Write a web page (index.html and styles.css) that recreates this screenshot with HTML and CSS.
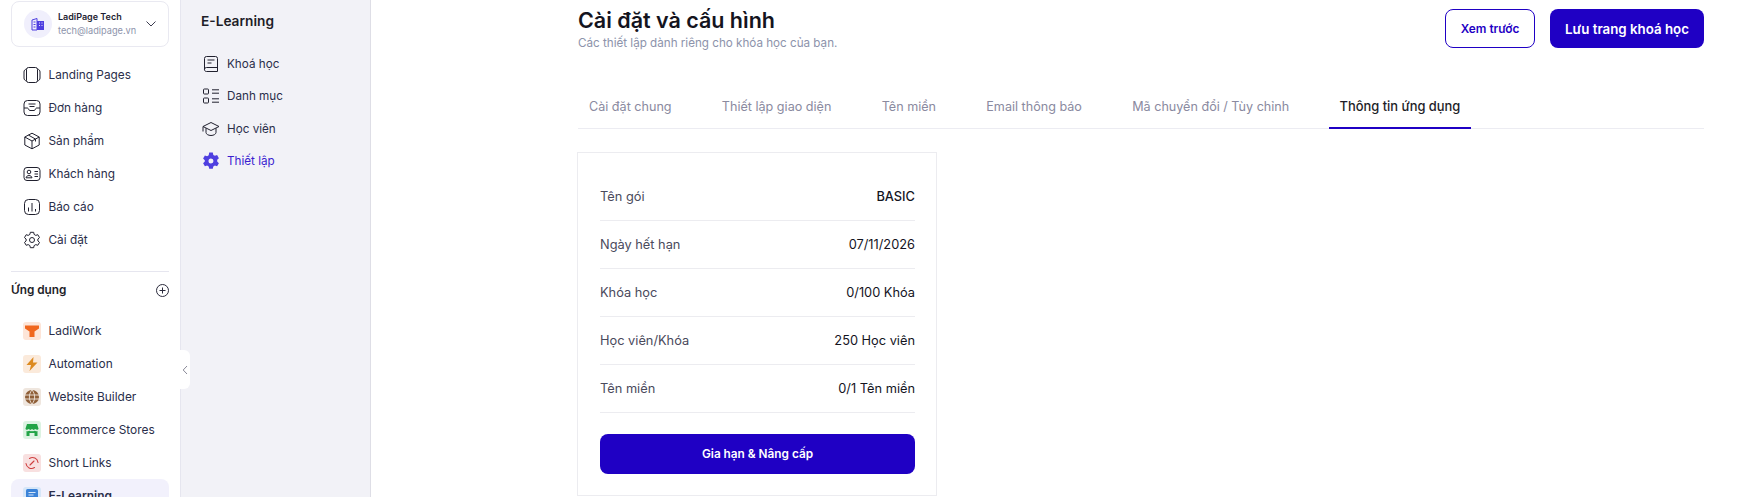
FILE: index.html
```html
<!DOCTYPE html>
<html lang="en">
<head>
    <meta charset="UTF-8">
    <meta name="viewport" content="width=device-width, initial-scale=1.0">
    <title>Cài đặt và cấu hình</title>
    <link rel="stylesheet" href="styles.css">
</head>
<body>
    <div class="container">
        <div class="sidebar">
            <div class="account">
                <div class="account-logo">
                    <svg width="14" height="14" viewBox="0 0 14 14"><path d="M1 13V3l5-1.500V13z" fill="none" stroke="#4f3fe0" stroke-width="1"/><path d="M6 4h7v9H6z" fill="#4f3fe0"/><path d="M2.500 5h2M2.500 7.500h2M2.500 10h2" stroke="#4f3fe0"/><path d="M8 6h1M10.500 6h1M8 8.500h1M10.500 8.500h1" stroke="#e4e1fb"/></svg>
                </div>
                <div class="account-info">
                    <div class="account-name">LadiPage Tech</div>
                    <div class="account-mail">tech@ladipage.vn</div>
                </div>
                <svg class="chevron" width="12" height="8" viewBox="0 0 12 8"><path d="M1.500 1.500 6 6l4.500-4.500" fill="none" stroke="#3c3c50" stroke-width="1"/></svg>
            </div>
            <div class="nav">
                <div class="nav-item">
                    <svg class="icon" viewBox="0 0 18 18"><rect x="3.500" y="1.500" width="11" height="15" rx="2"/><path d="M3.500 3C1.800 3.500 1 4.500 1 6v6c0 1.500.8 2.500 2.500 3M14.500 3c1.700.5 2.500 1.500 2.500 3v6c0 1.500-.8 2.500-2.500 3"/></svg>
                    Landing Pages
                </div>
                <div class="nav-item">
                    <svg class="icon" viewBox="0 0 18 18"><rect x="1" y="1.500" width="16" height="15" rx="3.500"/><path d="M1 9h3.500c1 0 1 2.500 2.500 2.500h4c1.500 0 1.500-2.500 2.500-2.500H17M5.500 5h7M6.500 7.500h5"/></svg>
                    Đơn hàng
                </div>
                <div class="nav-item">
                    <svg class="icon" viewBox="0 0 18 18"><path d="M9 1.200 16.200 5v8L9 16.800 1.800 13V5zM1.800 5 9 9l7.200-4M9 9v7.800M5.500 3.100l7 4v2.400"/></svg>
                    Sản phẩm
                </div>
                <div class="nav-item">
                    <svg class="icon" viewBox="0 0 18 18"><rect x="1" y="2.500" width="16" height="13" rx="3"/><circle cx="6" cy="7" r="1.800"/><path d="M3 12.800c.4-3 5.600-3 6 0zM11.500 6.500H15M11.500 9H15M11.500 11.500H15"/></svg>
                    Khách hàng
                </div>
                <div class="nav-item">
                    <svg class="icon" viewBox="0 0 18 18"><rect x="1.500" y="1.500" width="15" height="15" rx="4"/><path d="M5.500 9.500v4M9 5v8.500M12.500 11v2.500"/></svg>
                    Báo cáo
                </div>
                <div class="nav-item">
                    <svg class="icon" viewBox="0 0 18 18"><circle cx="9" cy="9" r="2.500"/><path d="M7.300 1.300h3.400l.4 2.100 1.700 1 2-.7 1.700 2.900-1.600 1.400v2l1.600 1.400-1.700 2.900-2-.7-1.700 1-.4 2.100H7.300l-.4-2.100-1.700-1-2 .7-1.700-2.900 1.600-1.400v-2L1.500 6.600l1.700-2.900 2 .7 1.700-1z" stroke-linejoin="round"/></svg>
                    Cài đặt
                </div>
            </div>
            <div class="apps-head">
                <span>Ứng dụng</span>
                <svg width="13" height="13" viewBox="0 0 13 13" class="add"><circle cx="6.500" cy="6.500" r="6"/><path d="M6.500 3.500v6M3.500 6.500h6"/></svg>
            </div>
            <div class="apps">
                <div class="app-item">
                    <span class="app-icon tint-orange"><svg width="14" height="14" viewBox="0 0 14 14"><path d="M0 1.500h14v3L9.500 7.500V13h-5V7.500L0 4.500z" fill="#f0671e"/></svg></span>
                    LadiWork
                </div>
                <div class="app-item">
                    <span class="app-icon tint-amber"><svg width="14" height="14" viewBox="0 0 14 14"><path d="M8.500 0 1.500 8H6L4.500 14 12.500 5.500H8z" fill="#dc8a20"/></svg></span>
                    Automation
                </div>
                <div class="app-item">
                    <span class="app-icon tint-brown"><svg width="14" height="14" viewBox="0 0 14 14"><circle cx="7" cy="7" r="7" fill="#8f5f38"/><path d="M0 5h14M0 9h14M7 0C3.500 4 3.500 10 7 14M7 0c3.500 4 3.500 10 0 14" fill="none" stroke="#efe6de" stroke-width=".9"/></svg></span>
                    Website Builder
                </div>
                <div class="app-item">
                    <span class="app-icon tint-green"><svg width="14" height="14" viewBox="0 0 14 14"><path d="M2 1h10l1.500 4.500c0 1.500-2 1.800-3.200.6-1 1.100-2.400 1.100-3.300 0-1 1.100-2.300 1.100-3.300 0C2.500 7.300.5 7 .5 5.500zM1.500 8c1 .3 2 .2 2.800-.2.900.6 1.800.6 2.700.2.900.4 1.800.4 2.700-.2.800.4 1.800.5 2.800.2v5H9.500v-3h-5v3h-3z" fill="#22a447"/></svg></span>
                    Ecommerce Stores
                </div>
                <div class="app-item">
                    <span class="app-icon tint-red"><svg width="14" height="14" viewBox="0 0 14 14" fill="none" stroke="#cf3f3f" stroke-width="1.100" stroke-linecap="round"><path d="M4.500 2.500A5.500 5.500 0 0 1 13 6.500M9.500 11.500A5.500 5.500 0 0 1 1 7.500M5 9 9 5"/></svg></span>
                    Short Links
                </div>
                <div class="app-item active">
                    <span class="app-icon tint-blue"><svg width="14" height="14" viewBox="0 0 14 14"><rect x="1" y="0" width="12" height="14" rx="1.500" fill="#3b83d8"/><path d="M3.500 3.500h7M3.500 6h5" stroke="#d6e6f8" stroke-width="1.200"/></svg></span>
                    E-Learning
                </div>
            </div>
            <div class="collapse">
                <svg width="6" height="10" viewBox="0 0 6 10"><path d="M5 1 1.200 5 5 9" fill="none" stroke="#8a8a98" stroke-width="1"/></svg>
            </div>
        </div>
        <div class="subnav">
            <h2>E-Learning</h2>
            <div class="sub-item">
                <svg class="icon" viewBox="0 0 18 18"><path d="M2.500 14V3.500a2 2 0 0 1 2-2h9a2 2 0 0 1 2 2v13h-11a2 2 0 0 1-2-2.500 2 2 0 0 1 2-1.500h11M5.500 5h7M5.500 8h4"/></svg>
                Khoá học
            </div>
            <div class="sub-item">
                <svg class="icon" viewBox="0 0 18 18"><rect x="1.500" y="2" width="5" height="5" rx=".8"/><rect x="1.500" y="11" width="5" height="5" rx=".8"/><path d="M10 2.800h7M10 6.200h7M10 11.800h7M10 15.200h7"/></svg>
                Danh mục
            </div>
            <div class="sub-item">
                <svg class="icon" viewBox="0 0 18 18"><path d="M9 2.500 17 6.500 9 10.500 1 6.500zM4 8.200v4.300c0 1.500 2.200 3 5 3s5-1.500 5-3V8.200M1 6.500v5"/></svg>
                Học viên
            </div>
            <div class="sub-item current">
                <svg class="icon" viewBox="0 0 18 18"><path class="solid" fill-rule="evenodd" d="M7.200.6h3.600l.5 2.300 1.600.9 2.200-.7 1.800 3.100-1.700 1.600v1.800l1.700 1.600-1.800 3.100-2.200-.7-1.600.9-.5 2.300H7.200l-.5-2.300-1.600-.9-2.200.7-1.800-3.100 1.700-1.600V8.200L1.100 6.600l1.800-3.100 2.200.7 1.600-.9zM9 6.500a2.500 2.500 0 1 0 0 5 2.500 2.500 0 0 0 0-5z"/></svg>
                Thiết lập
            </div>
        </div>
        <div class="main-content">
            <div class="page-head">
                <div>
                    <h1>Cài đặt và cấu hình</h1>
                    <p class="page-desc">Các thiết lập dành riêng cho khóa học của bạn.</p>
                </div>
                <div class="actions">
                    <button class="button outline">Xem trước</button>
                    <button class="button primary">Lưu trang khoá học</button>
                </div>
            </div>
            <div class="tabs">
                <div class="tab">Cài đặt chung</div>
                <div class="tab">Thiết lập giao diện</div>
                <div class="tab">Tên miền</div>
                <div class="tab">Email thông báo</div>
                <div class="tab">Mã chuyển đổi / Tùy chỉnh</div>
                <div class="tab active">Thông tin ứng dụng</div>
            </div>
            <div class="card">
                <div class="row"><span class="label">Tên gói</span><span class="value strong">BASIC</span></div>
                <div class="row"><span class="label">Ngày hết hạn</span><span class="value">07/11/2026</span></div>
                <div class="row"><span class="label">Khóa học</span><span class="value">0/100 Khóa</span></div>
                <div class="row"><span class="label">Học viên/Khóa</span><span class="value">250 Học viên</span></div>
                <div class="row"><span class="label">Tên miền</span><span class="value">0/1 Tên miền</span></div>
                <button class="button upgrade">Gia hạn &amp; Nâng cấp</button>
            </div>
        </div>
    </div>
</body>
</html>
```

FILE: styles.css
```css
* { box-sizing: border-box; }
html, body { margin: 0; height: 100%; overflow: hidden; }
body { font-family: Inter, "Noto Sans", sans-serif; color: #1e1e32; background-color: #fff; }
.container { display: flex; height: 497px; overflow: hidden; }

.sidebar { position: relative; width: 180px; flex-shrink: 0; padding: 1px 11px 0; background-color: #fff; }
.account { display: flex; align-items: center; height: 46px; padding: 0 11px 0 12px; border: 1px solid #e9e9f1; border-radius: 8px; }
.account-logo { display: flex; align-items: center; justify-content: center; flex-shrink: 0; width: 28px; height: 28px; border-radius: 50%; background-color: #f0effc; }
.account-info { margin-left: 6px; flex: 1; }
.account-name { font-size: 9px; font-weight: 600; line-height: 14px; color: #1e1e32; }
.account-mail { font-size: 9.200px; line-height: 14px; color: #8d93ab; }
.chevron { flex-shrink: 0; }

.icon { width: 18px; height: 18px; flex-shrink: 0; fill: none; stroke: #20202e; stroke-width: 1; }
.nav { margin-top: 11.500px; padding-left: 12px; padding-bottom: 14.500px; border-bottom: 1px solid #e6e6ef; }
.nav-item { display: flex; align-items: center; gap: 7.500px; height: 33px; font-size: 11.800px; color: #2a2e4a; }

.apps-head { display: flex; align-items: center; justify-content: space-between; margin-top: 8px; height: 20px; font-size: 11.800px; font-weight: 600; color: #1e1e28; }
.add { fill: none; stroke: #2a2a3c; stroke-width: 1; }
.apps { margin-top: 14px; }
.app-item { display: flex; align-items: center; gap: 7.500px; height: 33px; padding-left: 12px; font-size: 11.900px; color: #2a2e4a; border-radius: 8px; }
.app-item.active { background-color: #f2f1fc; font-weight: 600; }
.app-icon { display: flex; align-items: center; justify-content: center; flex-shrink: 0; width: 18px; height: 18px; border-radius: 3px; }
.tint-orange { background-color: #fde5d8; }
.tint-amber { background-color: #fbeadb; }
.tint-brown { background-color: #efe6de; }
.tint-green { background-color: #dcf3e2; }
.tint-red { background-color: #f8e0e0; }
.tint-blue { background-color: #d6e6f8; }
.collapse { position: absolute; top: 350px; right: -10px; display: flex; align-items: center; justify-content: center; width: 11px; height: 39px; background-color: #fff; border-radius: 0 6px 6px 0; }

.subnav { width: 191px; flex-shrink: 0; padding: 13px 0 0 21px; background-color: #f2f2f7; border-left: 1px solid #e6e6ef; border-right: 1px solid #dedee6; }
.subnav h2 { margin: 0 0 18px -1px; font-size: 13.700px; line-height: 17px; font-weight: 600; color: #1e1e28; }
.sub-item { display: flex; align-items: center; gap: 7px; height: 32.300px; font-size: 11.700px; color: #2a2e4a; }
.sub-item.current { color: #3a1fd0; }
.sub-item .solid { fill: #4f3fe0; stroke: none; }

.main-content { flex: 1; padding: 0 51px 0 207px; }
.page-head { display: flex; justify-content: space-between; height: 85px; padding-top: 9px; }
h1 { margin: 0; font-size: 21.500px; line-height: 22px; font-weight: 600; color: #14141e; }
.page-desc { margin: 5px 0 0; font-size: 11.650px; line-height: 15px; color: #8d93ab; }
.actions { display: flex; gap: 15px; align-items: flex-start; }
.button { font-family: Inter, "Noto Sans", sans-serif; border: none; cursor: pointer; border-radius: 8px; }
.outline { width: 90px; height: 39px; font-size: 11.800px; font-weight: 600; color: #1f00c4; background-color: #fff; border: 1px solid #1f00c4; }
.primary { width: 154px; height: 39px; font-size: 13.300px; font-weight: 600; color: #fff; background-color: #1f00c4; }

.tabs { display: flex; gap: 28.300px; border-bottom: 1px solid #ececf2; height: 44px; }
.tab { padding: 0 11px; font-size: 12.600px; line-height: 43px; height: 44px; color: #8a8aa0; }
.tab.active { font-size: 12.900px; font-weight: 500; color: #1e1e28; border-bottom: 2px solid #1f00c4; }

.card { width: 360px; margin-top: 23px; margin-left: -1px; padding: 20px 21px 21px 22px; border: 1px solid #ececf0; }
.row { display: flex; justify-content: space-between; align-items: center; height: 48px; font-size: 12.800px; border-bottom: 1px solid #ececf0; }
.label { color: #4a4a5c; }
.value { color: #14141e; }
.strong { font-weight: 500; }
.upgrade { display: block; width: 100%; height: 40px; margin-top: 21px; font-size: 11.800px; font-weight: 600; color: #fff; background-color: #1f00c4; }
```
